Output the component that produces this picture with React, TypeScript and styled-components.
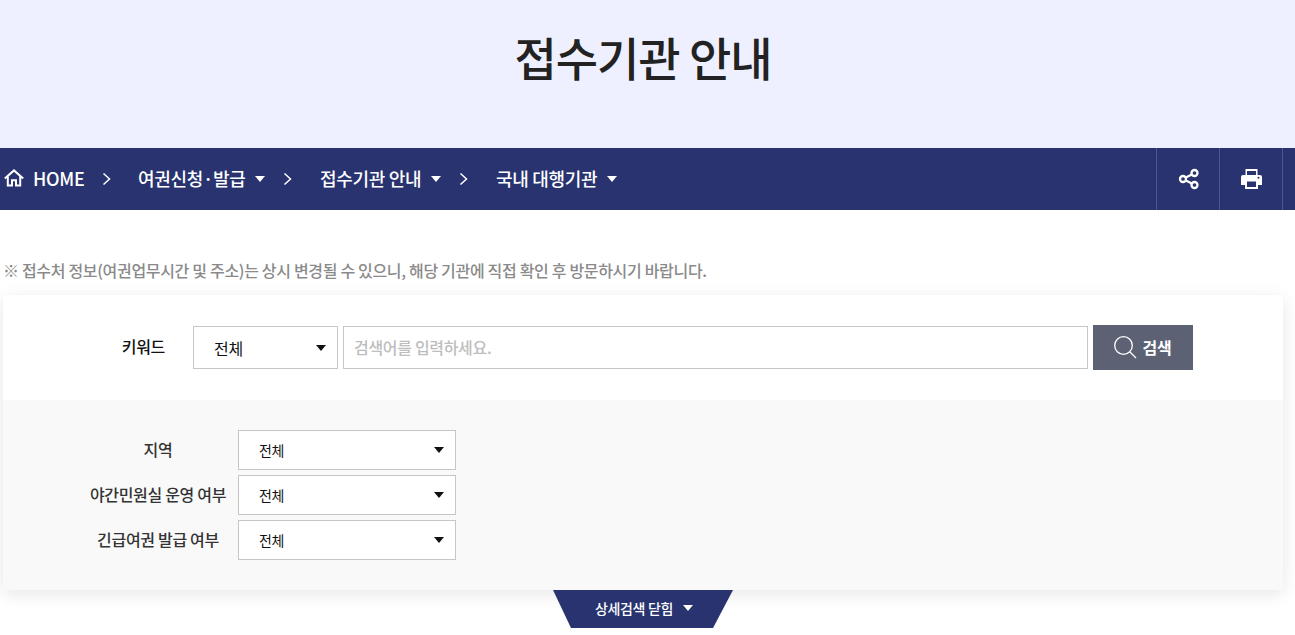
import { createGlobalStyle, styled } from "styled-components";

const GlobalStyle = createGlobalStyle`
  html, body {
    margin: 0;
    padding: 0;
    background: #fff;
    overflow: hidden;
  }
  body {
    font-family: "Noto Sans CJK KR", "Noto Sans", sans-serif;
    letter-spacing: -0.02em;
  }
`;

const Page = styled.div`
  width: 1295px;
  height: 635px;
  overflow: hidden;
`;

const Hero = styled.div`
  height: 148px;
  display: flex;
  align-items: flex-start;
  justify-content: center;
  background: #eef0ff;
`;

const Title = styled.h1`
  margin: 23px 0 0 -9px;
  color: #222;
  font-size: 46px;
  line-height: 66px;
  font-weight: 500;
  letter-spacing: -0.022em;
`;

const NavBar = styled.div`
  height: 62px;
  display: flex;
  justify-content: space-between;
  background: #283370;
  color: #fff;
`;

const Crumbs = styled.div`
  display: flex;
  align-items: center;
  padding-left: 4px;
`;

const Crumb = styled.span<{ $width: number }>`
  display: flex;
  align-items: center;
  box-sizing: border-box;
  width: ${(p) => p.$width}px;
  padding-bottom: 2px;
  font-size: 18px;
  font-weight: 500;
  white-space: nowrap;
`;

const HomeText = styled.span`
  margin-left: 9px;
`;

const Caret = styled.i`
  display: inline-block;
  flex: none;
  margin-left: 10px;
  border-style: solid;
  border-color: currentColor transparent transparent;
  border-width: 6px 5px 0;
`;

const CrumbCaret = styled(Caret)`
  margin-top: 2px;
`;

const Chevron = styled.svg`
  flex: none;
  display: block;
`;

const Actions = styled.div`
  display: flex;
  margin-right: 12px;
  border-right: 1px solid #4e5890;
`;

const ActionButton = styled.div`
  width: 63px;
  padding-left: 2px;
  box-sizing: border-box;
  display: flex;
  align-items: center;
  justify-content: center;
  border-left: 1px solid #4e5890;
`;

const PrintIcon = styled.svg`
  margin-left: -2px;
`;

const Note = styled.p`
  margin: 49px 0 0 3px;
  height: 22px;
  color: #8a8a8a;
  font-size: 16px;
  line-height: 22px;
  font-weight: 500;
`;

const Card = styled.div`
  width: 1280px;
  height: 295px;
  margin: 14px 0 0 3px;
  display: flex;
  flex-direction: column;
  border-radius: 3px;
  background: #fff;
  box-shadow: 0 4px 18px rgba(0, 0, 0, 0.1);
`;

const KeywordRow = styled.div`
  height: 105px;
  display: flex;
  align-items: center;
`;

const KeywordLabel = styled.div`
  width: 190px;
  padding-right: 28px;
  box-sizing: border-box;
  text-align: right;
  color: #111;
  font-size: 16px;
  font-weight: 500;
  margin-top: -3px;
`;

const Select = styled.div<{ $width: number; $height: number }>`
  box-sizing: border-box;
  width: ${(p) => p.$width}px;
  height: ${(p) => p.$height}px;
  padding: 0 11px 0 20px;
  display: flex;
  align-items: center;
  justify-content: space-between;
  border: 1px solid #c6c6c6;
  background: #fff;
  color: #111;
`;

const SelectText = styled.span<{ $size: number; $lift: number }>`
  margin-top: ${(p) => -p.$lift}px;
  font-size: ${(p) => p.$size}px;
  font-weight: 400;
`;

const SearchInput = styled.div`
  box-sizing: border-box;
  width: 745px;
  height: 43px;
  margin: 0 5px;
  padding: 0 0 1px 10px;
  display: flex;
  align-items: center;
  border: 1px solid #c6c6c6;
  color: #bdbdbd;
  font-size: 16px;
  font-weight: 500;
`;

const SearchButton = styled.div`
  box-sizing: border-box;
  width: 100px;
  height: 45px;
  padding: 0 2px 2px 0;
  display: flex;
  align-items: center;
  justify-content: center;
  gap: 6px;
  background: #5c6274;
  color: #fff;
  font-size: 16px;
  font-weight: 700;
`;

const Filters = styled.div`
  flex: 1;
  padding-top: 30px;
  display: flex;
  flex-direction: column;
  gap: 5px;
  background: #f9f9f9;
  border-radius: 0 0 3px 3px;
`;

const FilterRow = styled.div`
  display: flex;
  align-items: center;
`;

const FilterLabel = styled.div`
  width: 235px;
  padding: 0 0 2px 75px;
  box-sizing: border-box;
  text-align: center;
  color: #333;
  font-size: 16px;
  font-weight: 500;
  white-space: nowrap;
`;

const Toggle = styled.div`
  box-sizing: border-box;
  width: 180px;
  height: 38px;
  margin-left: 553px;
  padding: 0 0 2px 2px;
  display: flex;
  align-items: center;
  justify-content: center;
  background: #283370;
  color: #fff;
  font-size: 14px;
  font-weight: 500;
  clip-path: polygon(0 0, 100% 0, 160px 100%, 18px 100%);
`;

const filters = ["지역", "야간민원실 운영 여부", "긴급여권 발급 여부"];

function ChevronIcon({ gap }: { gap: number }) {
  return (
    <Chevron width="9" height="14" viewBox="0 0 9 14" style={{ marginRight: gap }}>
      <path d="M1.5 1.5 7.5 7 1.5 12.5" fill="none" stroke="#fff" strokeWidth="1.5" />
    </Chevron>
  );
}

export default function App() {
  return (
    <Page>
      <GlobalStyle />
      <Hero>
        <Title>접수기관 안내</Title>
      </Hero>
      <NavBar>
        <Crumbs>
          <Crumb $width={98}>
            <svg width="20" height="18" viewBox="0 0 20 18" fill="none" stroke="#fff" strokeWidth="2">
              <path d="M.8 9.6 10 1.4l9.2 8.2" />
              <path d="M3.8 7.5V16.5h4.2v-5.2h4v5.2h4.2V7.5" />
            </svg>
            <HomeText>HOME</HomeText>
          </Crumb>
          <ChevronIcon gap={27} />
          <Crumb $width={145}>
            여권신청·발급
            <CrumbCaret />
          </Crumb>
          <ChevronIcon gap={28} />
          <Crumb $width={139}>
            접수기관 안내
            <CrumbCaret />
          </Crumb>
          <ChevronIcon gap={28} />
          <Crumb $width={130}>
            국내 대행기관
            <CrumbCaret />
          </Crumb>
        </Crumbs>
        <Actions>
          <ActionButton>
            <svg width="22" height="22" viewBox="0 0 22 22" fill="none" stroke="#fff" strokeWidth="2.3">
              <circle cx="5" cy="11" r="3" />
              <circle cx="16.5" cy="5" r="3" />
              <circle cx="16.5" cy="17" r="3" />
              <path d="M7.8 9.5 13.8 6.4M7.8 12.5l6 3.1" />
            </svg>
          </ActionButton>
          <ActionButton>
            <PrintIcon width="21" height="20" viewBox="0 0 21 20">
              <path
                fill="#fff"
                fillRule="evenodd"
                d="M4.5 0h12v6H19a2 2 0 0 1 2 2v8h-4v4H4v-4H0V8a2 2 0 0 1 2-2h2.5V0ZM6 2v4h9V2H6Zm0 10.5v5.5h9v-5.5H6ZM17.5 7.8a1 1 0 1 0 0 2 1 1 0 0 0 0-2Z"
              />
            </PrintIcon>
          </ActionButton>
        </Actions>
      </NavBar>
      <Note>※ 접수처 정보(여권업무시간 및 주소)는 상시 변경될 수 있으니, 해당 기관에 직접 확인 후 방문하시기 바랍니다.</Note>
      <Card>
        <KeywordRow>
          <KeywordLabel>키워드</KeywordLabel>
          <Select $width={145} $height={43}>
            <SelectText $size={16} $lift={0}>전체</SelectText>
            <Caret />
          </Select>
          <SearchInput>검색어를 입력하세요.</SearchInput>
          <SearchButton>
            <svg width="24" height="24" viewBox="0 0 24 24" fill="none" stroke="#fff" strokeWidth="1.3">
              <circle cx="10.5" cy="10.5" r="8.8" />
              <path d="m17 17 6 6" />
            </svg>
            검색
          </SearchButton>
        </KeywordRow>
        <Filters>
          {filters.map((label) => (
            <FilterRow key={label}>
              <FilterLabel>{label}</FilterLabel>
              <Select $width={218} $height={40}>
                <SelectText $size={14} $lift={1}>전체</SelectText>
                <Caret />
              </Select>
            </FilterRow>
          ))}
        </Filters>
      </Card>
      <Toggle>
        상세검색 닫힘
        <Caret />
      </Toggle>
    </Page>
  );
}
